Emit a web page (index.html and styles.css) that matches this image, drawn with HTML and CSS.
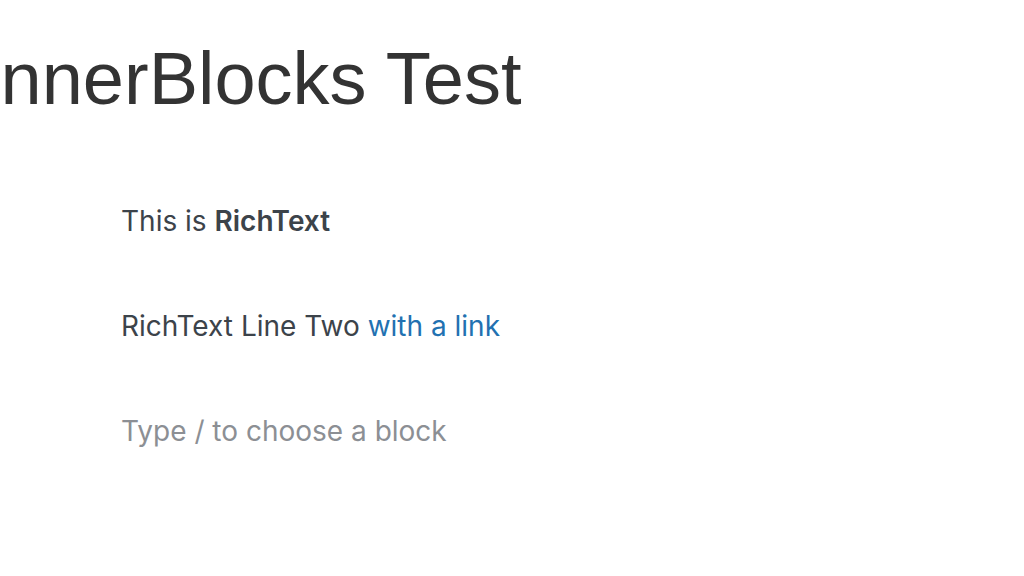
FILE: index.html
```html
<!DOCTYPE html>
<html>
<head>
<meta charset="utf-8">
<link rel="stylesheet" href="styles.css">
</head>
<body>
<div class="page">
  <h1 class="title">InnerBlocks Test</h1>
  <div class="blocks">
    <p class="para">This is <strong>RichText</strong></p>
    <p class="para">RichText Line Two <a class="link" href="#">with a link</a></p>
    <p class="para placeholder">Type / to choose a block</p>
  </div>
</div>
</body>
</html>
```
FILE: styles.css
```css
html, body {
  margin: 0;
  padding: 0;
  background: #ffffff;
  overflow: hidden;
}
.page {
  width: 1024px;
  height: 576px;
  overflow: hidden;
  font-family: "Liberation Sans", Arial, sans-serif;
}
.title {
  margin: 0;
  padding-top: 35px;
  margin-left: -20px;
  font-size: 74px;
  font-weight: 400;
  line-height: 88px;
  color: #333333;
  white-space: nowrap;
}
.blocks {
  padding-left: 121px;
  padding-top: 82px;
  display: flex;
  flex-direction: column;
  gap: 72px;
}
.para {
  margin: 0;
  font-family: Inter, "Liberation Sans", sans-serif;
  font-size: 28px;
  line-height: 33px;
  color: #3c434a;
}
.para strong {
  font-weight: 600;
}
.link {
  color: #2271b1;
  text-decoration: none;
}
.placeholder {
  color: #8c8f94;
}
```
